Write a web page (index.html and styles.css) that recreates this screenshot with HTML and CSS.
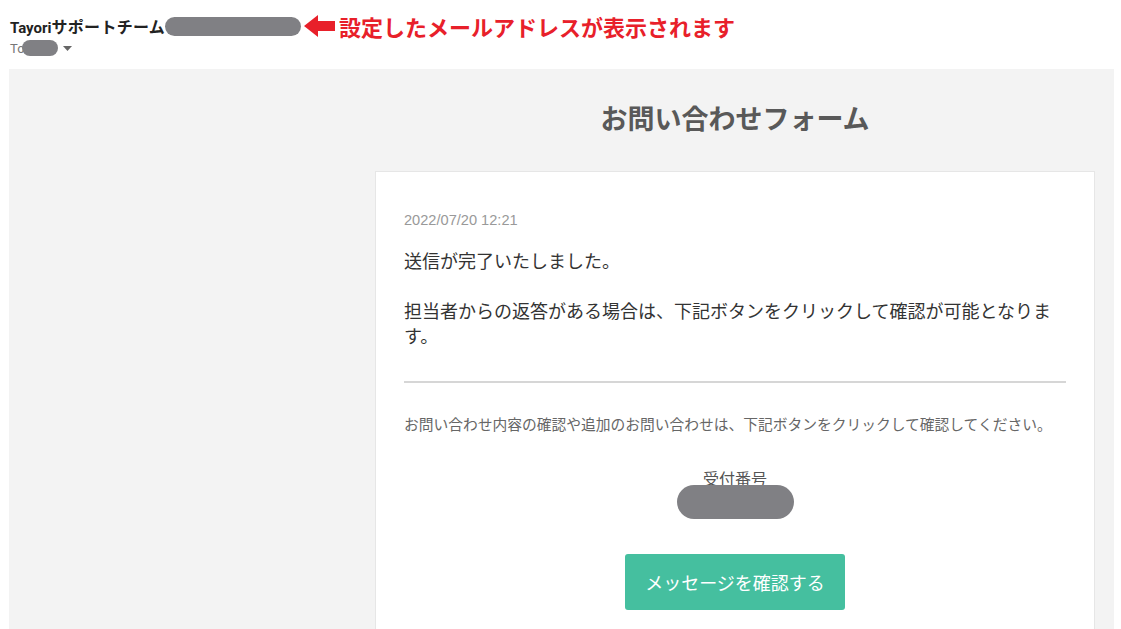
FILE: index.html
```html
<!DOCTYPE html>
<html lang="ja">
<head>
<meta charset="utf-8">
<link rel="stylesheet" href="styles.css">
</head>
<body>
<header class="mail-head">
  <div class="from-row">
    <span class="sender">Tayori<span class="sender-jp">サポートチーム</span></span>
    <span class="redact redact-from"></span>
    <svg class="arrow" width="32" height="22" viewBox="0 0 32 22"><path d="M0 11 L14 0 L14 6 L31 6 L31 16 L14 16 L14 22 Z" fill="#e8202a"/></svg>
    <span class="note">設定したメールアドレスが表示されます</span>
  </div>
  <div class="to-row">
    <span class="to">To</span>
    <span class="redact redact-to"></span>
    <svg class="caret" width="9" height="5" viewBox="0 0 9 5"><path d="M0 0 L9 0 L4.5 5 Z" fill="#666"/></svg>
  </div>
</header>
<main class="mail-body">
  <div class="column">
    <h1 class="title">お問い合わせフォーム</h1>
    <section class="card">
      <div class="date">2022/07/20 12:21</div>
      <p class="msg">送信が完了いたしました。</p>
      <p class="msg">担当者からの返答がある場合は、下記ボタンをクリックして確認が可能となります。</p>
      <hr class="divider">
      <p class="sub">お問い合わせ内容の確認や追加のお問い合わせは、下記ボタンをクリックして確認してください。</p>
      <div class="ticket">
        <div class="ticket-label">受付番号</div>
        <span class="redact redact-ticket"></span>
      </div>
      <div class="btn-wrap"><a class="btn">メッセージを確認する</a></div>
    </section>
  </div>
</main>
</body>
</html>
```
FILE: styles.css
```css
html, body {
  margin: 0;
  padding: 0;
  background: #fff;
  height: 100%;
  overflow: hidden;
}
body {
  font-family: Roboto, "Noto Sans CJK JP", sans-serif;
}
.mail-head {
  padding: 0 0 0 10px;
  height: 69px;
  box-sizing: border-box;
}
.from-row {
  display: flex;
  align-items: center;
  height: 22px;
  padding-top: 15px;
}
.sender {
  font-weight: 700;
  font-size: 15px;
  color: #222;
  white-space: nowrap;
}
.sender-jp {
  font-family: "Noto Sans CJK JP", sans-serif;
  font-size: 16px;
  letter-spacing: 0.3px;
}
.redact {
  display: inline-block;
  background: #808084;
}
.redact-from {
  width: 136px;
  height: 19px;
  border-radius: 10px;
  margin-left: 0;
}
.arrow {
  margin-left: 3px;
}
.note {
  margin-left: 3px;
  font-family: "Noto Sans CJK JP", sans-serif;
  font-weight: 700;
  font-size: 22px;
  color: #e8202a;
  line-height: 22px;
}
.to-row {
  display: flex;
  align-items: center;
  height: 18px;
  margin-top: 2px;
}
.to {
  font-size: 13px;
  color: #777;
}
.redact-to {
  width: 36px;
  height: 16px;
  border-radius: 8px;
  margin-left: -3px;
}
.caret {
  margin-left: 5px;
}
.mail-body {
  margin: 0 7px 0 9px;
  background: #f3f3f3;
  min-height: 560px;
  padding-top: 30px;
  display: flex;
  justify-content: flex-end;
  padding-right: 19px;
}
.column {
  width: 720px;
}
.title {
  margin: 0;
  text-align: center;
  font-family: "Noto Sans CJK JP", sans-serif;
  font-size: 27px;
  line-height: 38px;
  font-weight: 700;
  color: #595959;
}
.card {
  margin-top: 34px;
  background: #fff;
  border: 1px solid #e6e6e6;
  padding: 38px 28px 40px 28px;
  min-height: 500px;
  font-family: "Noto Sans CJK JP", sans-serif;
}
.date {
  font-family: "Liberation Sans", Arial, sans-serif;
  font-size: 14.6px;
  line-height: 20px;
  color: #999;
}
.msg {
  margin: 18px 0 0 0;
  font-size: 18px;
  line-height: 25px;
  color: #333;
}
.msg + .msg {
  margin-top: 25px;
}
.divider {
  border: 0;
  height: 2px;
  background: #d6d6d6;
  margin: 33px 0 0 0;
}
.sub {
  margin: 31px 0 0 0;
  font-size: 14.75px;
  line-height: 20px;
  color: #666;
}
.ticket {
  margin-top: 33px;
  display: flex;
  flex-direction: column;
  align-items: center;
}
.ticket-label {
  font-size: 16px;
  line-height: 22px;
  color: #555;
}
.redact-ticket {
  width: 117px;
  height: 34px;
  border-radius: 17px;
  margin-top: -4px;
}
.btn-wrap {
  display: flex;
  justify-content: center;
  margin-top: 35px;
}
.btn {
  display: flex;
  align-items: center;
  justify-content: center;
  width: 220px;
  height: 56px;
  background: #45bf9f;
  border-radius: 3px;
  color: #fff;
  font-size: 18px;
}
```
